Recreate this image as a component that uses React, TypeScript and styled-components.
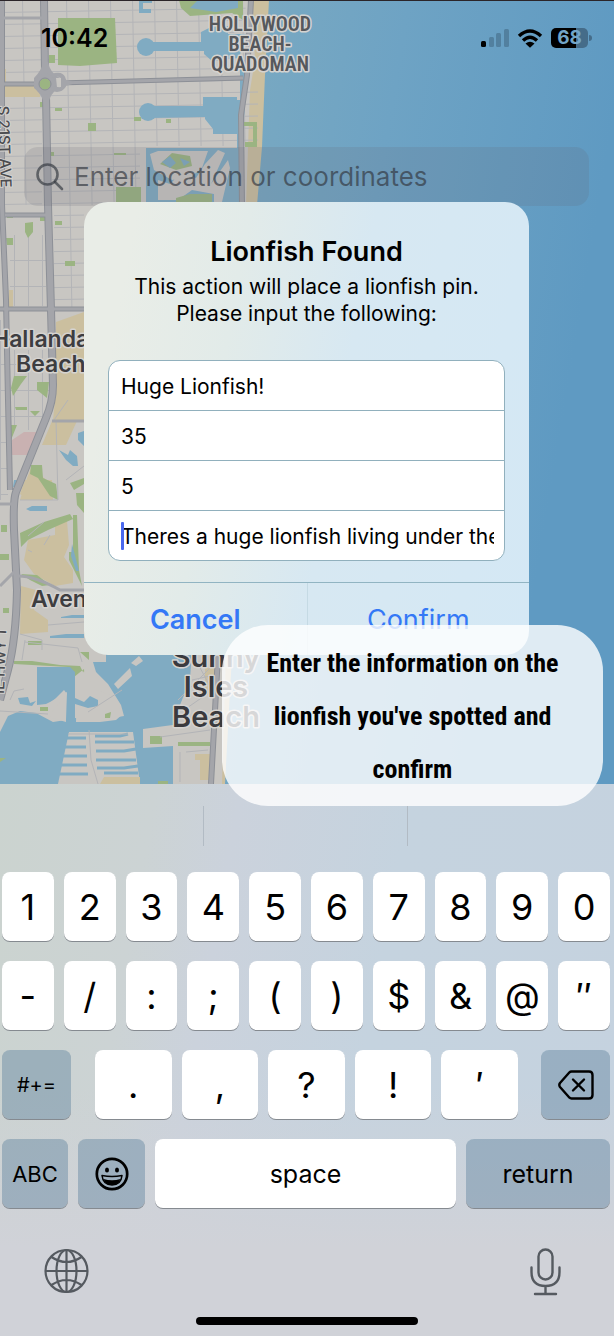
import React from "react";
import styled, { createGlobalStyle } from "styled-components";

const GlobalStyle = createGlobalStyle`
  *, *::before, *::after { box-sizing: border-box; }
  body {
    margin: 0;
    font-family: Inter, "Liberation Sans", sans-serif;
    color: #000;
    background: #d0d2d8;
  }
  button, input { font: inherit; color: inherit; }
`;

const Screen = styled.main`
  display: flex;
  flex-direction: column;
  min-height: 100vh;
`;

const MapArea = styled.section`
  position: relative;
  z-index: 1;
  flex: 1 0 auto;
  display: flex;
  flex-direction: column;
  align-items: center;
  padding: 0 1px 129px 0;
`;

const MapDrawing = styled.svg`
  position: absolute;
  inset: 0;
  width: 100%;
  height: 100%;
  z-index: -1;
`;

const StatusBar = styled.header`
  width: 100%;
  height: 147px;
  padding: 22px 25px 0 41px;
  display: flex;
  justify-content: space-between;
  align-items: flex-start;
`;

const Time = styled.time`
  font-size: 25px;
  line-height: 32px;
  font-weight: 600;
`;

const StatusIcons = styled.div`
  display: flex;
  align-items: center;
  gap: 8px;
  height: 32px;
`;

const Battery = styled.div`
  position: relative;
  width: 37px;
  height: 20px;
  border-radius: 5px;
  background: linear-gradient(90deg, #000 68%, #456c89 68%);
  color: #72a5c8;
  font-size: 19px;
  line-height: 20px;
  font-weight: 700;
  text-align: center;

  &::after {
    content: "";
    position: absolute;
    right: -4px;
    top: 7px;
    width: 3px;
    height: 6px;
    border-radius: 0 3px 3px 0;
    background: #456c89;
  }
`;

const SearchBar = styled.label`
  width: calc(100% - 48px);
  height: 59px;
  display: flex;
  align-items: center;
  gap: 10px;
  padding: 0 12px;
  border-radius: 14px;
  background: rgba(100, 100, 110, 0.17);
  color: rgba(50, 54, 62, 0.66);
`;

const SearchInput = styled.input`
  flex: 1;
  min-width: 0;
  border: 0;
  padding: 0;
  background: none;
  outline: none;
  font-size: 26px;
  line-height: 36px;
  &::placeholder { color: rgba(50, 54, 62, 0.66); opacity: 1; }
`;

const Dialog = styled.form`
  width: calc(100% - 168px);
  margin-top: -4px;
  border-radius: 24px;
  overflow: hidden;
  background: linear-gradient(100deg, #e9ede7 10%, #e2ebe9 32%, #d7e8f2 56%, #d4e8f5 100%);
`;

const DialogBody = styled.div`
  padding: 32px 24px 21px;
  text-align: center;
`;

const DialogTitle = styled.h1`
  margin: 0;
  font-size: 27px;
  line-height: 36px;
  font-weight: 600;
`;

const DialogText = styled.p`
  margin: 3px 0 33px;
  font-size: 21px;
  line-height: 27px;
`;

const FieldGroup = styled.div`
  border: 1px solid #91b0bd;
  border-radius: 12px;
  background: #fff;
  overflow: hidden;
`;

const FieldRow = styled.div`
  position: relative;
  height: 49px;
  & + & {
    height: 50px;
    border-top: 1px solid #91b0bd;
  }
`;

const Field = styled.input`
  width: 100%;
  height: 100%;
  border: 0;
  padding: 2px 10px 0 12px;
  background: none;
  outline: none;
  font-size: 21px;
`;

const Caret = styled.span`
  position: absolute;
  left: 12px;
  top: 11px;
  width: 3px;
  height: 28px;
  border-radius: 1px;
  background: #4a68ee;
`;

const DialogActions = styled.div`
  display: grid;
  grid-template-columns: 1fr 1fr;
  border-top: 1px solid #91b4c2;
`;

const ActionButton = styled.button<{ $strong?: boolean }>`
  height: 72px;
  border: 0;
  padding: 0;
  background: none;
  color: #3478f6;
  font-size: 27px;
  font-weight: ${(p) => (p.$strong ? 600 : 400)};
  & + & { border-left: 1px solid #c5dae4; }
`;

const Callout = styled.aside`
  position: absolute;
  right: 11px;
  bottom: -22px;
  width: 381px;
  padding: 12px 0 10px;
  border-radius: 46px;
  background: rgba(255, 255, 255, 0.8);
  font-family: "Roboto Condensed", Roboto, "Liberation Sans", sans-serif;
  font-weight: 700;
  font-size: 26px;
  line-height: 53px;
  text-align: center;
`;

const Line = styled.span`
  display: block;
  white-space: nowrap;
`;

const Keyboard = styled.section`
  background:
    linear-gradient(180deg, rgba(208, 210, 216, 0) 55%, #d0d2d8 84%),
    linear-gradient(100deg, #cbd3cf 0%, #ccd3d4 22%, #cbd2dc 34%, #c5d3df 58%, #c5d2df 100%);
`;

const Suggestions = styled.div`
  display: grid;
  grid-template-columns: 1fr 1fr 1fr;
  height: 88px;
  padding: 22px 4px 26px 0;
`;

const Suggestion = styled.div`
  & + & { border-left: 1px solid #b2bbc4; }
`;

const Keys = styled.div`
  display: flex;
  flex-direction: column;
  gap: 20px;
  padding: 0 4px 0 2px;
`;

const KeyRow = styled.div`
  display: flex;
  gap: 10px;
`;

const KeyGroup = styled.div`
  flex: 1;
  display: flex;
  gap: 10px;
  margin: 0 13px 0 14px;
`;

const Key = styled.button<{ $tone?: "light" | "dark"; $width?: number; $size?: number }>`
  flex: ${(p) => (p.$width ? `0 0 ${p.$width}px` : "1 1 0")};
  min-width: 0;
  height: 69px;
  display: flex;
  align-items: center;
  justify-content: center;
  border: 0;
  border-radius: 8px;
  padding: 0;
  background: ${(p) => (p.$tone === "dark" ? "rgba(104, 138, 164, 0.48)" : "#fff")};
  box-shadow: 0 1px 0 #858a90;
  font-size: ${(p) => p.$size ?? 36}px;
  line-height: 44px;
`;

const KeyboardFooter = styled.div`
  display: flex;
  justify-content: space-between;
  padding: 40px 52px 0 43px;
`;

const IconButton = styled.button`
  border: 0;
  padding: 0;
  background: none;
  color: #555a60;
  display: flex;
`;

const HomeIndicator = styled.div`
  width: 36%;
  height: 8px;
  margin: 21px auto 11px;
  border-radius: 4px;
  background: #000;
`;

const LAND = "#c8c6c2";
const WATER = "#80abc2";
const GREEN = "#9bb482";
const TAN = "#cbbf9f";
const ROAD = "#a4a5aa";
const STREET = "#b3b4b7";

const MapLayer = () => (
  <MapDrawing viewBox="0 0 614 784" preserveAspectRatio="xMinYMin slice" aria-hidden="true">
    <defs>
      <linearGradient id="ocean" x1="0.3" y1="0" x2="1" y2="0.15">
        <stop offset="0" stopColor="#7eabc0" />
        <stop offset="0.5" stopColor="#6ea3c4" />
        <stop offset="1" stopColor="#5f9ac2" />
      </linearGradient>
      <pattern id="streets" width="22" height="12" patternUnits="userSpaceOnUse" patternTransform="rotate(-1)">
        <path d="M0 .5H22M.5 0V12" stroke={STREET} fill="none" />
      </pattern>
      <pattern id="blocks" width="14" height="26" patternUnits="userSpaceOnUse">
        <path d="M0 .5H14M.5 0V26" stroke={STREET} fill="none" />
      </pattern>
    </defs>
    <rect width="614" height="784" fill="url(#ocean)" />
    <path d="M0 0H269L265 75L262 147L257 205L252 400L240 600L232 655L225 784H0Z" fill={TAN} />
    <path d="M0 0H252L255 60L250 90L246 205L240 500L226 655L222 784H0Z" fill={LAND} />
    <path d="M48 0H246L240 146H48Z" fill="url(#streets)" />
    <path d="M4 0H42V205H4ZM52 146H140V205H52ZM54 205H84V310H54Z" fill="url(#streets)" />
    <path d="M10 235H46V306H10ZM0 320H8V500H0ZM10 350H50V430H10Z" fill="url(#blocks)" />
    <path d="M242 90H258V146H242Z" fill="url(#streets)" />

    <g fill={TAN}>
      <path d="M0 69H6V85H40V97H0Z" />
      <path d="M56 322L84 312V420H53L56 390Z" />
      <path d="M52 421H77L66 445H42Z" />
      <path d="M31 468L44 478L52 485L53 500H20L27 478Z" />
      <path d="M25 480H52V500H28L20 494Z" />
      <path d="M28 540L55 535V524L67 521L69 545L64 557L73 570V583L55 586L34 574L24 560Z" />
      <path d="M21 586L36 590L34 610L48 620V632L20 634Z" />
      <path d="M9 290H13V307H9ZM205 668H216V695H205ZM195 754H210V780H200V760H195Z" />
    </g>
    <path d="M24 432H38L31 455H12V440Z" fill="#c9b1b1" />

    <g fill={GREEN}>
      <path d="M58 18H115L117 63L80 66L58 65Z" />
      <path d="M179 0H243V20L232 13L190 16L181 8Z" />
      <path d="M49 55H55V63H49ZM40 102H44V107H40ZM55 108H62V111H55ZM88 123H96V131H88ZM134 117H141V121H134ZM166 119H171V123H166ZM51 152H54V156H51ZM114 153H126V155H114Z" />
      <path d="M244 122H257V147H245V142H253V126H244ZM116 187H141V203H116Z" />
      <path d="M25 223L33 222V232L28 238L25 232ZM55 221H62V225H55ZM65 261H75V266H65ZM6 238H13V245H7ZM40 216H46V221H40ZM7 213H13V218H7Z" />
      <path d="M14 376H27L21 384L13 396L11 388ZM37 382H49L47 398L37 390ZM15 407H27V410H16ZM30 411H40L35 416ZM10 425H17L11 440ZM31 465H42L43 478L56 484L58 500L50 496L38 478L30 474Z" />
      <path d="M70 483L84 478V484L74 490ZM76 493H84V513L77 505ZM20 533L44 522L70 514L73 519L48 530L28 540L21 547ZM73 515H77L79 570L82 586L69 560V552H73ZM1 525H7V532H1ZM0 554H9V560H0ZM3 608H9V613H3ZM21 574L37 575L50 585L42 586L30 580Z" />
      <path d="M14 661H32L60 665L80 666L92 690L100 702L93 698L85 684L84 669L74 677L68 667L14 664ZM28 641H42V645H28ZM80 652H89V660Z" />
    </g>

    <g fill={WATER}>
      <circle cx="146" cy="47" r="9" />
      <path d="M148 42H201V32L213 26H228V34H246L239 58L212 61L204 54V51H150Z" />
      <circle cx="148" cy="112" r="9" />
      <path d="M150 106H203V97H237V134H213V129L205 119V117L150 118Z" />
      <path d="M139 0H152V3H143V9H151V13H139Z" />
      <path d="M198 0H238V8L216 12L190 8Z" />
      <path d="M240 60H248L242 147L240 205H228L234 148H237V100H240Z" />
      <path d="M146 148H230L234 148V205H146Z" />
      <path d="M59 450L68 455L70 450L77 456L78 466H73L66 460ZM78 433L84 431V446L78 440ZM26 509L32 506H47V511H30ZM72 544L79 571H76L71 556ZM66 634H84V638H50V636ZM14 480H18V487H13ZM61 617L72 615H84V618H61Z" />
      <path d="M37 667H70L75 672V718L112 718L124 716L121 705L108 684L96 672L93 662L106 662V650H192L190 680L178 710L180 724L143 729V748L173 746V784H0V732L8 716L20 711L36 713L53 722L66 720L67 692L50 702L46 704L37 705Z" />
    </g>

    <g fill={LAND}>
      <path d="M150 154L158 151H208L202 168L192 176L172 180L154 170ZM158 180L170 184L182 172L196 178L205 164L218 150L225 153L211 184L228 160L230 168L222 202H214V194L192 190L178 200H158Z" />
      <path d="M77 683L84 671L96 690L112 696L123 714L116 720L100 722H76Z" />
      <path d="M114 684L130 668L132 676L118 689ZM131 663L139 656L143 661L136 666Z" />
      <path d="M42 712L64 690L67 694L50 714L66 718V722L52 718Z" />
      <path d="M69 732H133L140 784H58Z" />
    </g>
    <path d="M18 698L28 697L30 703L36 701L32 706L20 704Z" fill={WATER} />
    <path d="M75 698L84 702L90 696L98 700L98 706L88 708L75 704Z" fill={WATER} />
    <g stroke={WATER} strokeWidth="3" fill="none">
      <path d="M66 738H86M64 747H86M62 756H87M60 765H87M58 774H88" />
      <path d="M95 736H120L128 734M95 742H134M96 751H124L136 749M96 760H136M97 768H124L138 766M104 773H138" />
    </g>
    <path d="M104 777H140V784H100Z" fill={TAN} />
    <path d="M150 736H162V744H150ZM178 742H210V746H178ZM105 714L111 712L110 718H105ZM40 707H48V711H40ZM158 781H168V784H158ZM0 758H6L0 762Z" fill={GREEN} />

    <path d="M89 730L91 760L98 784M68 734H128M88 712L122 690M160 737L210 730M10 700L14 691L24 689M25 640L22 660M25 642L78 648L82 662M0 711L48 714M20 634L42 640V650M48 625L84 622M66 480L84 466M54 420L68 400M28 536L44 522M20 500H58L56 420M44 545L50 535M28 550L32 552" stroke={STREET} fill="none" />
    <path d="M178 700L210 668M184 710L210 692M192 680L210 676M180 752V782M186 752L208 750M198 664L212 690" stroke={STREET} fill="none" />
    <path d="M160 164L172 153L190 156L192 166L176 170ZM176 198L190 194H212V203H176Z" fill={GREEN} />
    <path d="M162 162L170 156L176 163L170 168ZM180 158L190 162L184 166Z" fill={WATER} />

    <g fill="none" stroke="#8d9097" strokeLinejoin="round">
      <path d="M44 0L45 72M46 96L48 205L51 310L53 385Q53 402 46 418L16 492Q13 500 14 530L17 590Q16 640 8 670L0 700" strokeWidth="8" />
      <path d="M58 83L243 78M0 84H35M0 309H84M5 215H47" strokeWidth="5" />
      <path d="M251 0L247 75L241 115L242 205M218 655L211 784" strokeWidth="6" />
      <path d="M2 0L2 205L6 300L8 400L10 490" strokeWidth="6" />
    </g>
    <g fill="none" stroke={ROAD} strokeLinejoin="round">
      <path d="M44 0L45 72M46 96L48 205L51 310L53 385Q53 402 46 418L16 492Q13 500 14 530L17 590Q16 640 8 670L0 700" strokeWidth="6" />
      <path d="M58 83L243 78M0 84H35M0 309H84M5 215H47M0 504H14M0 586L14 572M18 576Q35 576 60 590H84M4 18H44M52 421H84" strokeWidth="3" />
      <path d="M251 0L247 75L241 115L242 205M218 655L211 784" strokeWidth="4" />
      <path d="M2 0L2 205L6 300L8 400L10 490" strokeWidth="4" />
    </g>
    <path d="M43 62Q42 70 34 78V88Q42 94 44 104H48Q50 94 58 88L76 83L58 77Q50 72 48 62Z" fill={ROAD} />
    <path d="M52 76Q62 72 64 80V86Q60 92 52 89" fill="none" stroke={ROAD} strokeWidth="4" />
    <path d="M56 78H61V87H57Z" fill={LAND} />
    <circle cx="45" cy="84" r="8" fill={GREEN} stroke={ROAD} strokeWidth="5" />
    <circle cx="45" cy="84" r="6" fill="none" stroke="#8d9097" />

    <g fontFamily="Inter, 'Liberation Sans', sans-serif" fontWeight="600" stroke="#d5d3d0" strokeWidth="3" strokeLinejoin="round" paintOrder="stroke">
      <g fontFamily="'Roboto Condensed', Roboto, 'Liberation Sans', sans-serif" fontSize="20" fill="#56585c" textAnchor="middle">
        <text x="260" y="31">HOLLYWOOD</text>
        <text x="260" y="51">BEACH-</text>
        <text x="260" y="71">QUADOMAN</text>
      </g>
      <g fontSize="23" fill="#3d3d40">
        <text x="-8" y="347">Hallanda</text>
        <text x="16" y="372">Beach</text>
        <text x="31" y="607">Aven</text>
      </g>
      <g fontSize="29" fill="#3a3a3e" textAnchor="middle">
        <text x="216" y="667">Sunny</text>
        <text x="216" y="697">Isles</text>
        <text x="216" y="727">Beach</text>
      </g>
      <g fontSize="15" fontWeight="500" strokeWidth="2" fill="#4b4b4f">
        <text transform="translate(-2 106) rotate(88)">S 21ST AVE</text>
        <text transform="translate(4 694) rotate(-88)">IE HWY 1</text>
      </g>
    </g>
    <rect width="614" height="1" fill="#2b2529" />
  </MapDrawing>
);

const SignalIcon = () => (
  <svg width="28" height="18" viewBox="0 0 28 18" aria-hidden="true">
    <rect x="0" y="12" width="5" height="6" rx="1.5" />
    <g fill="#52809f">
      <rect x="8" y="8" width="5" height="10" rx="1.5" />
      <rect x="15" y="4" width="5" height="14" rx="1.5" />
      <rect x="23" y="0" width="5" height="18" rx="1.5" />
    </g>
  </svg>
);

const WifiIcon = () => (
  <svg width="26" height="19" viewBox="0 0 26 19" aria-hidden="true">
    <path d="M2 7Q13-3 24 7M6 11.500Q13 5 20 11.500" fill="none" stroke="#000" strokeWidth="3.400" />
    <path d="M8.500 14.500Q13 10.800 17.500 14.500L13 18.800Z" />
  </svg>
);

const SearchIcon = () => (
  <svg width="28" height="28" viewBox="0 0 28 28" fill="none" stroke="currentColor" strokeWidth="2.600" strokeLinecap="round" aria-hidden="true">
    <circle cx="11.500" cy="11.500" r="10" />
    <path d="M19 19L26 26" />
  </svg>
);

const DeleteIcon = () => (
  <svg width="36" height="30" viewBox="0 0 36 30" fill="none" stroke="#000" strokeWidth="2.400" strokeLinecap="round" strokeLinejoin="round" aria-hidden="true">
    <path d="M13.500 1.500H31Q34.500 1.500 34.500 5V25Q34.500 28.500 31 28.500H13.500Q12.300 28.500 11.500 27.700L2 17Q.6 15 2 13L11.500 2.300Q12.300 1.500 13.500 1.500Z" />
    <path d="M15 9.500L26 20.500M26 9.500L15 20.500" />
  </svg>
);

const SmileIcon = () => (
  <svg width="34" height="34" viewBox="0 0 34 34" aria-hidden="true">
    <circle cx="17" cy="17" r="15.200" fill="none" stroke="#000" strokeWidth="2.700" />
    <ellipse cx="12" cy="13" rx="2" ry="2.500" />
    <ellipse cx="22" cy="13" rx="2" ry="2.500" />
    <path d="M7 18.500Q17 20.500 27 18.500Q26 28 17 28Q8 28 7 18.500Z" fill="none" stroke="#000" strokeWidth="1.500" strokeLinejoin="round" />
    <path d="M8.500 22Q17 24.500 25.500 22Q23.500 28 17 28Q10.500 28 8.500 22Z" />
  </svg>
);

const GlobeIcon = () => (
  <svg width="46" height="46" viewBox="0 0 46 46" fill="none" stroke="currentColor" strokeWidth="2.200" aria-hidden="true">
    <circle cx="23.500" cy="23" r="21" />
    <ellipse cx="23.500" cy="23" rx="10" ry="21" />
    <path d="M23.500 2V44M2.500 23H44.500M8.500 9Q23.500 19 38.500 9M8.500 37Q23.500 27 38.500 37" />
  </svg>
);

const MicIcon = () => (
  <svg width="32" height="48" viewBox="0 0 32 48" fill="none" stroke="currentColor" strokeWidth="2.400" strokeLinecap="round" aria-hidden="true">
    <rect x="8.500" y="1.500" width="14" height="30" rx="7" />
    <path d="M1.500 19.500V24Q1.500 38 15.500 38T29.500 24V19.500M15.500 38V46M5 46H26" />
  </svg>
);

const fields = [
  { label: "Title", value: "Huge Lionfish!" },
  { label: "Depth", value: "35" },
  { label: "Count", value: "5" },
  { label: "Description", value: "Theres a huge lionfish living under the", active: true },
];

const digits = ["1", "2", "3", "4", "5", "6", "7", "8", "9", "0"];
const symbols = ["-", "/", ":", ";", "(", ")", "$", "&", "@", "″"];
const marks = [".", ",", "?", "!", "′"];

export default function App() {
  return (
    <>
      <GlobalStyle />
      <Screen>
        <MapArea>
          <MapLayer />
          <StatusBar>
            <Time>10:42</Time>
            <StatusIcons>
              <SignalIcon />
              <WifiIcon />
              <Battery>68</Battery>
            </StatusIcons>
          </StatusBar>
          <SearchBar>
            <SearchIcon />
            <SearchInput type="text" placeholder="Enter location or coordinates" />
          </SearchBar>
          <Dialog onSubmit={(e) => e.preventDefault()}>
            <DialogBody>
              <DialogTitle>Lionfish Found</DialogTitle>
              <DialogText>
                <Line>This action will place a lionfish pin.</Line>
                <Line>Please input the following:</Line>
              </DialogText>
              <FieldGroup>
                {fields.map((f) => (
                  <FieldRow key={f.label}>
                    <Field type="text" aria-label={f.label} defaultValue={f.value} />
                    {f.active && <Caret />}
                  </FieldRow>
                ))}
              </FieldGroup>
            </DialogBody>
            <DialogActions>
              <ActionButton type="button" $strong>Cancel</ActionButton>
              <ActionButton type="submit">Confirm</ActionButton>
            </DialogActions>
          </Dialog>
          <Callout>
            <Line>Enter the information on the</Line>
            <Line>lionfish you've spotted and</Line>
            <Line>confirm</Line>
          </Callout>
        </MapArea>
        <Keyboard>
          <Suggestions>
            <Suggestion />
            <Suggestion />
            <Suggestion />
          </Suggestions>
          <Keys>
            <KeyRow>{digits.map((k) => <Key key={k}>{k}</Key>)}</KeyRow>
            <KeyRow>{symbols.map((k) => <Key key={k}>{k}</Key>)}</KeyRow>
            <KeyRow>
              <Key $tone="dark" $width={69} $size={20}>#+=</Key>
              <KeyGroup>{marks.map((k) => <Key key={k}>{k}</Key>)}</KeyGroup>
              <Key $tone="dark" $width={69} aria-label="Delete"><DeleteIcon /></Key>
            </KeyRow>
            <KeyRow>
              <Key $tone="dark" $width={66} $size={22}>ABC</Key>
              <Key $tone="dark" $width={67} aria-label="Emoji"><SmileIcon /></Key>
              <Key $size={25}>space</Key>
              <Key $tone="dark" $width={144} $size={25}>return</Key>
            </KeyRow>
          </Keys>
          <KeyboardFooter>
            <IconButton aria-label="Next keyboard"><GlobeIcon /></IconButton>
            <IconButton aria-label="Dictate"><MicIcon /></IconButton>
          </KeyboardFooter>
          <HomeIndicator />
        </Keyboard>
      </Screen>
    </>
  );
}
